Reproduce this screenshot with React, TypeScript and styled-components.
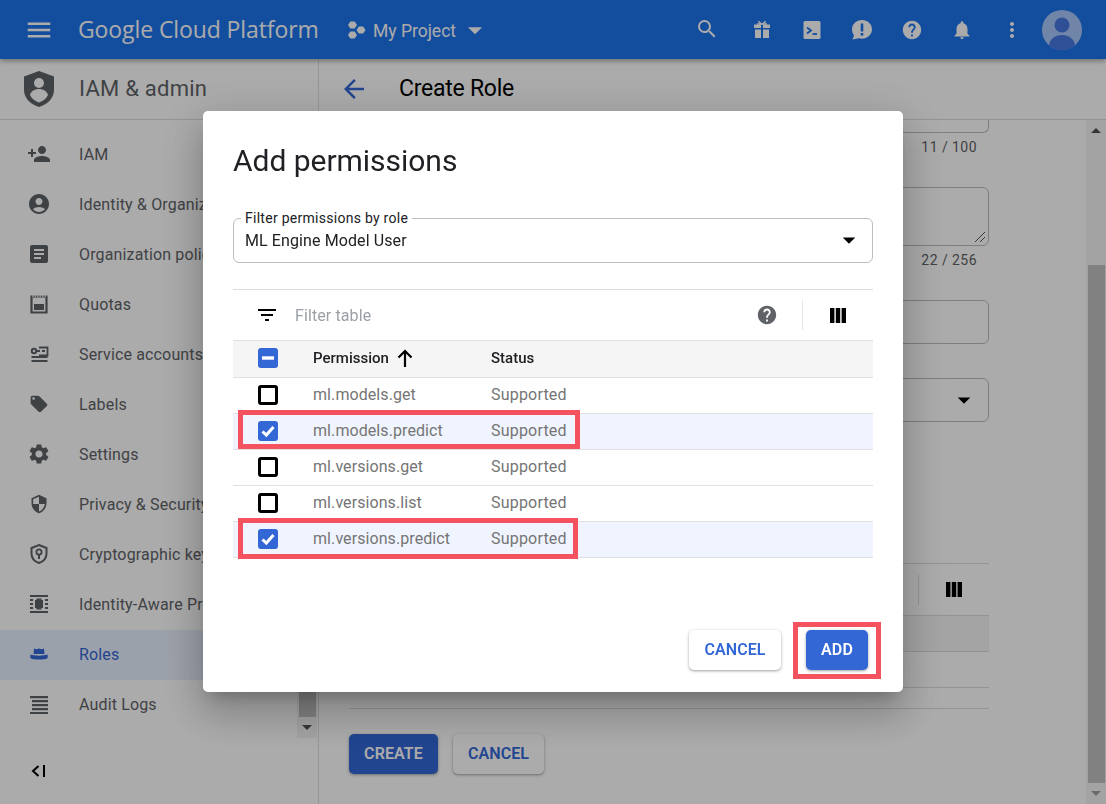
import React from "react";
import styled, { createGlobalStyle } from "styled-components";
import {
  MdMenu, MdSearch, MdHelp, MdNotifications, MdMoreVert, MdArrowDropDown, MdArrowBack,
  MdPersonAdd, MdAccountCircle, MdArticle, MdLocalOffer, MdSettings, MdSecurity,
  MdFilterList,
} from "react-icons/md";

const Global = createGlobalStyle`
  html, body { margin: 0; height: 100%; overflow: hidden; background: #fff; }
  body { font-family: Roboto, "Liberation Sans", sans-serif; }
  * { box-sizing: border-box; }
`;

const Page = styled.div`
  width: 1106px; height: 804px; display: flex; flex-direction: column; overflow: hidden;
`;
const TopBar = styled.header`
  height: 59px; flex: none; background: #1d74ec; color: #fff; display: flex; align-items: center;
  box-shadow: 0 2px 5px rgba(0,0,0,.35); position: relative; z-index: 1;
`;
const MenuSlot = styled.div`
  width: 78px; display: flex; justify-content: center; svg { display: block; }
`;
const Brand = styled.div`
  font-family: "Open Sans", sans-serif; font-size: 23px; letter-spacing: -.1px; width: 269px; white-space: nowrap; color: #fff; margin-top: -1px;
`;
const ProjectName = styled.div`
  font-size: 17.5px; margin-left: 6px; width: 91px; white-space: nowrap; margin-top: 2px;
`;
const Project = styled.div`display: flex; align-items: center; width: 335px; svg { display: block; flex: none; }`;
const IconSlot = styled.div<{ $w?: number }>`
  width: ${p => p.$w ?? 50}px; display: flex; justify-content: center; svg { display: block; }
`;
const SearchSlot = styled(IconSlot)`padding-right: 5px; svg { margin-top: -2px; }`;
const Avatar = styled.div`margin-left: 5px; svg { display: block; }`;

const Body = styled.div`flex: 1; display: flex; min-height: 0;`;
const Sidebar = styled.aside`
  width: 319px; flex: none; border-right: 1px solid #e0e0e0; display: flex; flex-direction: column;
`;
const RegionHead = styled.div`
  height: 61px; flex: none; border-bottom: 1px solid #dadce0; display: flex; align-items: center;
`;
const ShieldSlot = styled.div`width: 79px; padding-left: 24px; svg { display: block; }`;
const ProductTitle = styled.div`font-size: 22px; color: #5f6368; white-space: nowrap; letter-spacing: .25px; margin-top: -2px;`;
const SideMiddle = styled.div`height: 618px; flex: none; display: flex;`;
const Nav = styled.nav`flex: 1; padding-top: 10px; min-width: 0; overflow: hidden;`;
const NavItem = styled.div<{ $active?: boolean }>`
  height: 50px; padding-bottom: 2px; display: flex; align-items: center; font-size: 16px; letter-spacing: .15px; white-space: nowrap;
  color: ${p => (p.$active ? "#3367d6" : "#5f6368")};
  background: ${p => (p.$active ? "#e8f0fe" : "transparent")};
`;
const NavIcon = styled.div<{ $inset?: number }>`
  width: 79px; flex: none; padding-left: ${p => 27 + (p.$inset ?? 0)}px; svg { display: block; }
`;
const SideFoot = styled.div`flex: 1; display: flex; align-items: center; padding-left: 31px; padding-bottom: 1px; svg { display: block; }`;

const Bar = styled.div<{ $width: number; $end: number }>`
  width: ${p => p.$width}px; margin-right: ${p => p.$end}px; flex: none; display: flex; flex-direction: column; background: #f3f3f3;
`;
const BarArrow = styled.div`
  height: 21px; flex: none; display: flex; align-items: center; justify-content: center;
`;
const Triangle = styled.i<{ $up?: boolean; $c: string }>`
  display: block; width: 0; height: 0; border-left: 5px solid transparent; border-right: 5px solid transparent;
  ${p => (p.$up ? `border-bottom: 5px solid ${p.$c};` : `border-top: 5px solid ${p.$c};`)}
`;
const BarTrack = styled.div<{ $before: number }>`
  flex: 1; padding: ${p => p.$before}px 1px 0 2px; display: flex;
`;
const BarThumb = styled.div`flex: 1; background: #c1c1c1;`;

const Main = styled.main`flex: 1; display: flex; flex-direction: column; min-width: 0;`;
const BackSlot = styled.div`width: 80px; padding-left: 20px; color: #3367d6; svg { display: block; }`;
const PageTitle = styled.div`font-size: 23px; color: #000; white-space: nowrap; letter-spacing: -.25px; margin-top: -1px;`;
const MainBody = styled.div`flex: 1; display: flex; min-height: 0;`;
const Content = styled.div`flex: 1; padding-left: 30px; min-width: 0; overflow: hidden;`;
const Form = styled.div`width: 640px;`;
const Field = styled.div<{ $h: number; $mt: number; $cut?: boolean }>`
  height: ${p => p.$h}px; margin-top: ${p => p.$mt}px; border: 1px solid #bdbdbd; border-radius: 6px;
  ${p => p.$cut && "border-top: 0; border-top-left-radius: 0; border-top-right-radius: 0;"}
  display: flex; align-items: center; justify-content: flex-end; padding-right: 13px; position: relative;
`;
const Grip = styled.svg`position: absolute; right: 2px; bottom: 2px; display: block;`;
const Counter = styled.div`
  height: 28px; line-height: 28px; font-size: 14px; color: #5f6368; text-align: right; padding-right: 12px; letter-spacing: .45px;
`;
const BgToolbar = styled.div`
  margin-top: 141px; height: 52px; border-top: 1px solid #dadce0; display: flex; justify-content: flex-end; align-items: center;
`;
const BgDivider = styled.div`width: 1px; height: 30px; background: #dadce0; margin-right: 27px;`;
const BgColumns = styled.div`margin-right: 27px; svg { display: block; }`;
const BgHeadRow = styled.div`height: 37px; background: #f5f5f5; border-top: 1px solid #dadce0; border-bottom: 1px solid #dadce0;`;
const BgRow = styled.div<{ $h: number }>`height: ${p => p.$h}px; border-bottom: 1px solid #dadce0;`;
const FormActions = styled.div`display: flex; gap: 15px; margin-top: 25px;`;

const Button = styled.button<{ $w: number; $primary?: boolean }>`
  width: ${p => p.$w}px; height: 40px; border: 0; border-radius: 5px; padding: 0 0 2px; flex: none;
  font: 600 16px Roboto, sans-serif; letter-spacing: .1px;
  background: ${p => (p.$primary ? "#3367d6" : "#fff")};
  color: ${p => (p.$primary ? "#fff" : "#3367d6")};
  box-shadow: 0 1px 2px rgba(60,64,67,.3), 0 1px 3px 1px rgba(60,64,67,.15);
`;

const Overlay = styled.div`
  position: fixed; inset: 0; background: rgba(0,0,0,.33); display: flex; align-items: flex-start; justify-content: center; padding-top: 111px; z-index: 5;
`;
const Modal = styled.div`
  width: 700px; height: 581px; background: #fff; border-radius: 5px; padding: 30px 30px 22px; display: flex; flex-direction: column;
  box-shadow: 0 11px 15px -7px rgba(0,0,0,.2), 0 24px 38px 3px rgba(0,0,0,.14), 0 9px 46px 8px rgba(0,0,0,.12);
`;
const ModalTitle = styled.h2`
  margin: 0; font: 400 30px/40px Roboto, sans-serif; color: #202124; letter-spacing: -.03px;
`;
const RoleSelect = styled.div`
  margin-top: 37px; height: 45px; border: 1px solid #bdbdbd; border-radius: 6px; position: relative; display: flex;
  align-items: center; justify-content: space-between; padding: 0 12px 1px 11px; font-size: 16px; color: #202124; letter-spacing: .1px;
  svg { display: block; }
`;
const FloatLabel = styled.span`
  position: absolute; left: 7px; top: -9px; background: #fff; padding: 0 4px; font-size: 14px; line-height: 16px; color: #202124; letter-spacing: .27px;
`;
const Toolbar = styled.div`
  margin-top: 26px; height: 51px; border-top: 1px solid #dadce0; display: flex; align-items: center; padding-left: 22px;
  svg { display: block; }
`;
const FilterText = styled.div`flex: 1; margin-left: 16px; font-size: 16px; color: #9aa0a6; letter-spacing: .1px;`;
const ToolDivider = styled.div`width: 1px; height: 30px; background: #e8e8e8; margin: 0 27px 0 24px;`;
const ColumnSlot = styled.div`margin-right: 27px;`;
const Row = styled.div<{ $selected?: boolean; $head?: boolean }>`
  height: ${p => (p.$head ? 38 : 36)}px; padding-bottom: 2px; display: flex; align-items: center; position: relative; border-bottom: 1px solid #e0e0e0;
  background: ${p => (p.$head ? "#f5f5f5" : p.$selected ? "#f0f4fe" : "#fff")};
  ${p => p.$head && "border-top: 1px solid #e0e0e0;"}
  font-size: ${p => (p.$head ? 15 : 16)}px; color: ${p => (p.$head ? "#202124" : "#757575")};
  font-weight: ${p => (p.$head ? 500 : 400)};
`;
const CheckCell = styled.div`width: 80px; padding-left: 25px; flex: none;`;
const Check = styled.div<{ $on?: boolean }>`
  width: 20px; height: 20px; border-radius: 3px; display: flex; align-items: center; justify-content: center; color: #fff;
  background: ${p => (p.$on ? "#3367d6" : "#fff")};
  border: ${p => (p.$on ? "0" : "3px solid #000")};
  svg { display: block; }
`;
const NameCell = styled.div<{ $head?: boolean }>`
  width: 178px; flex: none; letter-spacing: ${p => (p.$head ? "0" : ".08px")}; display: flex; align-items: center;
  svg { display: block; margin-left: 8px; }
`;
const StatusCell = styled.div<{ $head?: boolean }>`letter-spacing: ${p => (p.$head ? "0" : ".2px")};`;
const Highlight = styled.div<{ $w: number; $h: number }>`
  position: absolute; left: 5px; top: -4px; width: ${p => p.$w}px; height: ${p => p.$h}px;
  border: 5px solid #f4525f; pointer-events: none;
`;
const ModalActions = styled.div`margin-top: auto; display: flex; justify-content: flex-end; padding-right: 5px;`;
const AddWrap = styled.div`margin-left: 25px; position: relative;`;
const AddHighlight = styled.div`
  position: absolute; left: -13px; top: -8px; width: 88px; height: 57px; border: 5px solid #f4525f; pointer-events: none;
`;

const Columns = ({ color = "#000" }: { color?: string }) => (
  <svg width="16" height="15" viewBox="0 0 16 15" fill={color}>
    <rect x="0" y="0" width="4.4" height="15" /><rect x="5.8" y="0" width="4.4" height="15" /><rect x="11.6" y="0" width="4.4" height="15" />
  </svg>
);
const CheckMark = () => (
  <svg width="14" height="14" viewBox="0 0 14 14" fill="none" stroke="#fff" strokeWidth="3">
    <path d="M1.500 7.500 5.300 11 12.500 3" />
  </svg>
);
const MinusMark = () => (
  <svg width="12" height="4" viewBox="0 0 12 4" fill="#fff"><rect width="12" height="3.4" y=".3" /></svg>
);
const UpArrow = () => (
  <svg width="16" height="18" viewBox="0 0 16 18" fill="none" stroke="#000" strokeWidth="2.200">
    <path d="M8 18V2M1.500 8.500 8 2l6.500 6.500" />
  </svg>
);
const GiftIcon = () => (
  <svg width="22" height="22" viewBox="0 0 22 22" fill="currentColor">
    <path d="M3 5.500h7v3.500H3zM12 5.500h7v3.500h-7zM4 10.500h6v8.500H4zM12 10.500h6v8.500h-6z" />
    <path d="M11 5.500 7.300 2.200M11 5.500l3.700-3.300M6 5h10" stroke="currentColor" strokeWidth="1.400" fill="none" />
  </svg>
);
const TerminalIcon = () => (
  <svg width="22" height="22" viewBox="0 0 22 22">
    <rect x="2.500" y="2" width="17" height="18" rx="1.500" fill="currentColor" />
    <path d="M6 8.500 10 11.500 6 14.500" stroke="#1d74ec" strokeWidth="1.800" fill="none" />
    <path d="M11.500 15h4.500" stroke="#1d74ec" strokeWidth="1.800" fill="none" />
  </svg>
);
const FeedbackIcon = () => (
  <svg width="24" height="24" viewBox="0 0 24 24">
    <path d="M12 2c5.500 0 10 4 10 9.300s-4.500 9.400-10 9.400c-1 0-2-.2-3-.5L2.500 21.500 4 17.200C2.800 15.700 2 13.600 2 11.300 2 6 6.500 2 12 2z" fill="currentColor" />
    <rect x="10.700" y="5.500" width="2.600" height="8" fill="#1d74ec" />
    <rect x="10.700" y="15" width="2.600" height="2.600" fill="#1d74ec" />
  </svg>
);
const HexIcon = () => (
  <svg width="20" height="20" viewBox="0 0 20 20" fill="currentColor">
    <path d="M2.300 1.500h4.400L9 5 6.700 8.500H2.300L0 5zM2.300 11.500h4.400L9 15l-2.300 3.500H2.300L0 15zM10.800 6.500h4.400L17.500 10l-2.300 3.500h-4.400L8.500 10z" transform="translate(1 0)" />
  </svg>
);
const AvatarIcon = () => (
  <svg width="40" height="40" viewBox="0 0 40 40">
    <defs><clipPath id="av"><circle cx="20" cy="20" r="20" /></clipPath></defs>
    <circle cx="20" cy="20" r="20" fill="#a8c7fa" />
    <g clipPath="url(#av)" fill="#4676e2">
      <circle cx="20" cy="15" r="7.500" />
      <ellipse cx="20" cy="36" rx="13" ry="11" />
    </g>
  </svg>
);
const ShieldIcon = () => (
  <svg width="30" height="36" viewBox="0 0 30 36">
    <path d="M15 0 30 5.500V19c0 8-6 14-15 17C6 33 0 27 0 19V5.500z" fill="#5f6368" />
    <circle cx="15" cy="12" r="5" fill="#fff" />
    <path d="M6 24c1-4 5-6 9-6s8 2 9 6c-2 4-5 6-9 7.500C11 30 8 28 6 24z" fill="#fff" />
  </svg>
);
const QuotaIcon = () => (
  <svg width="24" height="24" viewBox="0 0 24 24">
    <path d="M4.500 4.500h15v16h-15z" fill="none" stroke="currentColor" strokeWidth="2.200" />
    <path d="M5 4h14" stroke="#fff" strokeWidth="1.600" strokeDasharray="1.500 1" />
    <rect x="7" y="12" width="10" height="6" fill="currentColor" />
  </svg>
);
const ServiceIcon = () => (
  <svg width="24" height="24" viewBox="0 0 24 24" fill="none" stroke="currentColor">
    <circle cx="7" cy="9" r="2.200" strokeWidth="2" />
    <path d="M9 9h4" strokeWidth="2" />
    <path d="M12 5.500h8.500v8H12" strokeWidth="1.800" />
    <path d="M15 9h3" strokeWidth="2" />
    <path d="M4.500 15h16M4.500 19h16" strokeWidth="2" />
  </svg>
);
const CryptoIcon = () => (
  <svg width="24" height="24" viewBox="0 0 24 24" fill="none" stroke="currentColor">
    <path d="M12 3 19.500 6v5.500c0 4.500-3 8-7.500 9.500-4.500-1.500-7.500-5-7.500-9.500V6z" strokeWidth="2" />
    <circle cx="12" cy="10" r="2.600" strokeWidth="1.800" />
    <path d="M12 12v5" strokeWidth="2" />
  </svg>
);
const IapIcon = () => (
  <svg width="24" height="24" viewBox="0 0 24 24" fill="currentColor">
    <path d="M3 3h18v2H3zM3 19h18v2H3zM3 7h3v2H3zM3 11h3v2H3zM3 15h3v2H3zM18 7h3v2h-3zM18 11h3v2h-3zM18 15h3v2h-3zM8 8h1.500V6.500h5V8H16v8h-1.500v1.500h-5V16H8z" />
  </svg>
);
const HatIcon = () => (
  <svg width="24" height="24" viewBox="0 0 24 24" fill="currentColor">
    <path d="M6.500 12 7 6.500l2.500.8L12 6.500l2.500.8 2.500-.8.500 5.500z" />
    <path d="M3.500 12.500C7 14 17 14 20.500 12.500c.4 2.500.2 3.500-.5 4-2 1.300-14 1.300-16 0-.7-.5-.9-1.500-.5-4z" />
  </svg>
);
const LogsIcon = () => (
  <svg width="24" height="24" viewBox="0 0 24 24" fill="currentColor">
    <path d="M3 4h18v2.200H3zM5 8h16v2.200H5zM5 12h16v2.200H5zM5 16h16v2.200H5zM3 20h18v2H3z" />
  </svg>
);
const CollapseIcon = () => (
  <svg width="16" height="14" viewBox="0 0 16 14" fill="none" stroke="#000" strokeWidth="2">
    <path d="M7.500 2 2 7l5.500 5" />
    <path d="M13 1v12" />
  </svg>
);

const navItems: { label: string; icon: React.ReactNode; active?: boolean; inset?: number }[] = [
  { label: "IAM", icon: <MdPersonAdd size={24} /> },
  { label: "Identity & Organization", icon: <MdAccountCircle size={24} /> },
  { label: "Organization policies", icon: <MdArticle size={24} /> },
  { label: "Quotas", icon: <QuotaIcon /> },
  { label: "Service accounts", icon: <ServiceIcon /> },
  { label: "Labels", icon: <MdLocalOffer size={20} />, inset: 2 },
  { label: "Settings", icon: <MdSettings size={24} /> },
  { label: "Privacy & Security", icon: <MdSecurity size={20} />, inset: 2 },
  { label: "Cryptographic keys", icon: <CryptoIcon /> },
  { label: "Identity-Aware Proxy", icon: <IapIcon /> },
  { label: "Roles", icon: <HatIcon />, active: true },
  { label: "Audit Logs", icon: <LogsIcon /> },
];

const perms: { name: string; on?: boolean; hl?: [number, number] }[] = [
  { name: "ml.models.get" },
  { name: "ml.models.predict", on: true, hl: [342, 39] },
  { name: "ml.versions.get" },
  { name: "ml.versions.list" },
  { name: "ml.versions.predict", on: true, hl: [340, 41] },
];

export default function App() {
  return (
    <Page>
      <Global />
      <TopBar>
        <MenuSlot><MdMenu size={30} /></MenuSlot>
        <Brand>Google Cloud Platform</Brand>
        <Project>
          <HexIcon />
          <ProjectName>My Project</ProjectName>
          <MdArrowDropDown size={34} style={{ marginLeft: -6 }} />
        </Project>
        <SearchSlot $w={55}><MdSearch size={24} /></SearchSlot>
        <IconSlot><GiftIcon /></IconSlot>
        <IconSlot><TerminalIcon /></IconSlot>
        <IconSlot><FeedbackIcon /></IconSlot>
        <IconSlot><MdHelp size={22} /></IconSlot>
        <IconSlot><MdNotifications size={22} /></IconSlot>
        <IconSlot><MdMoreVert size={24} /></IconSlot>
        <Avatar><AvatarIcon /></Avatar>
      </TopBar>
      <Body>
        <Sidebar>
          <RegionHead>
            <ShieldSlot><ShieldIcon /></ShieldSlot>
            <ProductTitle>IAM &amp; admin</ProductTitle>
          </RegionHead>
          <SideMiddle>
            <Nav>
              {navItems.map(n => (
                <NavItem key={n.label} $active={n.active}>
                  <NavIcon $inset={n.inset}>{n.icon}</NavIcon>
                  {n.label}
                </NavItem>
              ))}
            </Nav>
            <Bar $width={20} $end={1}>
              <BarArrow><Triangle $up $c="#505050" /></BarArrow>
              <BarTrack $before={300}><BarThumb /></BarTrack>
              <BarArrow><Triangle $c="#505050" /></BarArrow>
            </Bar>
          </SideMiddle>
          <SideFoot><CollapseIcon /></SideFoot>
        </Sidebar>
        <Main>
          <RegionHead>
            <BackSlot><MdArrowBack size={30} /></BackSlot>
            <PageTitle>Create Role</PageTitle>
          </RegionHead>
          <MainBody>
            <Content>
              <Form>
                <Field $h={13} $mt={0} $cut />
                <Counter>11 / 100</Counter>
                <Field $h={59} $mt={26}>
                  <Grip width="12" height="12" viewBox="0 0 12 12" fill="none" stroke="#555" strokeWidth="1">
                    <path d="M1 11 11 1M6 11l5-5" />
                  </Grip>
                </Field>
                <Counter>22 / 256</Counter>
                <Field $h={44} $mt={26} />
                <Field $h={44} $mt={34}><MdArrowDropDown size={30} color="#000" style={{ marginRight: -4 }} /></Field>
                <BgToolbar>
                  <BgDivider />
                  <BgColumns><Columns /></BgColumns>
                </BgToolbar>
                <BgHeadRow />
                <BgRow $h={36} />
                <BgRow $h={21} />
                <FormActions>
                  <Button $w={89} $primary>CREATE</Button>
                  <Button $w={91}>CANCEL</Button>
                </FormActions>
              </Form>
            </Content>
            <Bar $width={20} $end={0}>
              <BarArrow><Triangle $up $c="#505050" /></BarArrow>
              <BarTrack $before={124}><BarThumb /></BarTrack>
              <BarArrow><Triangle $c="#a0a0a0" /></BarArrow>
            </Bar>
          </MainBody>
        </Main>
      </Body>
      <Overlay>
        <Modal>
          <ModalTitle>Add permissions</ModalTitle>
          <RoleSelect>
            <FloatLabel>Filter permissions by role</FloatLabel>
            ML Engine Model User
            <MdArrowDropDown size={30} color="#000" style={{ marginRight: -4, marginTop: -1 }} />
          </RoleSelect>
          <Toolbar>
            <MdFilterList size={24} color="#000" />
            <FilterText>Filter table</FilterText>
            <MdHelp size={22} color="#5f6368" />
            <ToolDivider />
            <ColumnSlot><Columns /></ColumnSlot>
          </Toolbar>
          <Row $head>
            <CheckCell><Check $on><MinusMark /></Check></CheckCell>
            <NameCell $head>Permission<UpArrow /></NameCell>
            <StatusCell $head>Status</StatusCell>
          </Row>
          {perms.map(p => (
            <Row key={p.name} $selected={p.on}>
              <CheckCell><Check $on={p.on}>{p.on && <CheckMark />}</Check></CheckCell>
              <NameCell>{p.name}</NameCell>
              <StatusCell>Supported</StatusCell>
              {p.hl && <Highlight $w={p.hl[0]} $h={p.hl[1]} />}
            </Row>
          ))}
          <ModalActions>
            <Button $w={92}>CANCEL</Button>
            <AddWrap>
              <Button $w={62} $primary>ADD</Button>
              <AddHighlight />
            </AddWrap>
          </ModalActions>
        </Modal>
      </Overlay>
    </Page>
  );
}
